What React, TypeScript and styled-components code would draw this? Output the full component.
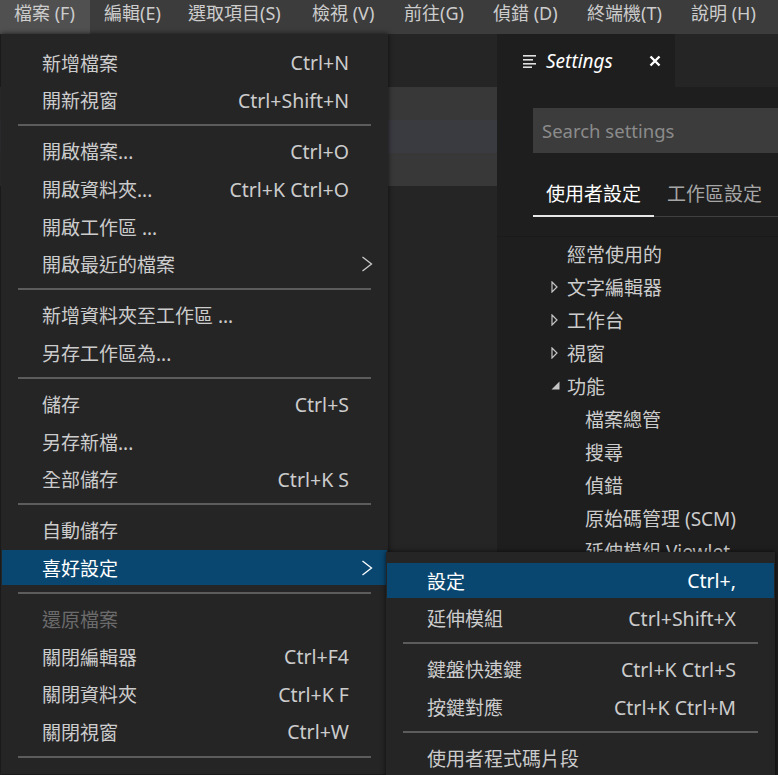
import React from "react";
import styled, { createGlobalStyle } from "styled-components";

const GlobalStyle = createGlobalStyle`
  html, body {
    margin: 0;
    padding: 0;
    background: #252526;
  }
  body {
    font-family: "Noto Sans", "Noto Sans CJK TC", sans-serif;
    overflow: hidden;
  }
`;

type MenuEntry =
  | { sep: true }
  | {
      label: string;
      keys?: string;
      submenu?: boolean;
      active?: boolean;
      disabled?: boolean;
    };

const topItems = [
  { label: "檔案 (F)", w: 90, open: true },
  { label: "編輯(E)", w: 84 },
  { label: "選取項目(S)", w: 124 },
  { label: "檢視 (V)", w: 92 },
  { label: "前往(G)", w: 89 },
  { label: "偵錯 (D)", w: 94 },
  { label: "終端機(T)", w: 104 },
  { label: "說明 (H)", w: 100 },
];

const fileMenu: MenuEntry[] = [
  { label: "新增檔案", keys: "Ctrl+N" },
  { label: "開新視窗", keys: "Ctrl+Shift+N" },
  { sep: true },
  { label: "開啟檔案...", keys: "Ctrl+O" },
  { label: "開啟資料夾...", keys: "Ctrl+K Ctrl+O" },
  { label: "開啟工作區 ..." },
  { label: "開啟最近的檔案", submenu: true },
  { sep: true },
  { label: "新增資料夾至工作區 ..." },
  { label: "另存工作區為..." },
  { sep: true },
  { label: "儲存", keys: "Ctrl+S" },
  { label: "另存新檔..." },
  { label: "全部儲存", keys: "Ctrl+K S" },
  { sep: true },
  { label: "自動儲存" },
  { label: "喜好設定", submenu: true, active: true },
  { sep: true },
  { label: "還原檔案", disabled: true },
  { label: "關閉編輯器", keys: "Ctrl+F4" },
  { label: "關閉資料夾", keys: "Ctrl+K F" },
  { label: "關閉視窗", keys: "Ctrl+W" },
  { sep: true },
];

const prefsMenu: MenuEntry[] = [
  { label: "設定", keys: "Ctrl+,", active: true },
  { label: "延伸模組", keys: "Ctrl+Shift+X" },
  { sep: true },
  { label: "鍵盤快速鍵", keys: "Ctrl+K Ctrl+S" },
  { label: "按鍵對應", keys: "Ctrl+K Ctrl+M" },
  { sep: true },
  { label: "使用者程式碼片段" },
];

const tree = [
  { label: "經常使用的", level: 0 },
  { label: "文字編輯器", level: 0, twistie: "closed" },
  { label: "工作台", level: 0, twistie: "closed" },
  { label: "視窗", level: 0, twistie: "closed" },
  { label: "功能", level: 0, twistie: "open" },
  { label: "檔案總管", level: 1 },
  { label: "搜尋", level: 1 },
  { label: "偵錯", level: 1 },
  { label: "原始碼管理 (SCM)", level: 1 },
  { label: "延伸模組 Viewlet", level: 1 },
  { label: "終端機", level: 1 },
  { label: "工作", level: 1 },
];

const Screen = styled.div`
  position: relative;
  width: 778px;
  height: 775px;
  overflow: hidden;
  background: #252526;
`;

const MenuBar = styled.div`
  display: flex;
  height: 34px;
  background: #3c3c3c;
`;

const MenuBarItem = styled.div<{ $open?: boolean }>`
  flex: none;
  box-sizing: border-box;
  height: 34px;
  padding-left: 14px;
  line-height: 26px;
  font-size: 18px;
  color: #cccccc;
  white-space: nowrap;
  background: ${(p) => (p.$open ? "#505050" : "transparent")};
`;

const Workbench = styled.div`
  display: flex;
  height: 741px;
`;

const SideGroup = styled.div`
  width: 497px;
  flex: none;
  display: flex;
  flex-direction: column;
  background: #252526;
`;

const TabStrip = styled.div`
  display: flex;
  height: 53px;
  flex: none;
  background: #252526;
`;

const PreviewBlock = styled.div`
  height: 99px;
  display: flex;
  align-items: center;
  background: #383838;
`;

const PreviewBand = styled.div`
  height: 33px;
  width: 100%;
  background: #3a3a41;
`;

const SettingsEditor = styled.div`
  flex: 1;
  min-width: 0;
  display: flex;
  flex-direction: column;
  background: #1e1e1e;
  overflow: hidden;
`;

const EditorTab = styled.div`
  width: 178px;
  box-sizing: border-box;
  display: flex;
  align-items: center;
  padding-left: 26px;
  background: #1e1e1e;
  color: #ffffff;
`;

const TabTitle = styled.span`
  margin-left: 9px;
  font-size: 19px;
  font-style: italic;
`;

const CloseButton = styled.span`
  margin-left: auto;
  margin-right: 14px;
  display: flex;
`;

const SettingsHeader = styled.div`
  height: 150px;
  flex: none;
  box-sizing: border-box;
  padding: 21px 0 0 36px;
  border-bottom: 1px solid #1a1a1a;
`;

const SearchBox = styled.div`
  height: 45px;
  margin-right: -40px;
  padding-left: 9px;
  display: flex;
  align-items: center;
  background: #3c3c3c;
  color: #8b8b8b;
  font-size: 18.5px;
`;

const ScopeTabs = styled.div`
  display: flex;
  margin-top: 17px;
  margin-right: -40px;
  border-bottom: 1px solid #404040;
`;

const ScopeTab = styled.div<{ $active?: boolean }>`
  height: 45px;
  padding: 0 13px;
  margin-bottom: -1px;
  display: flex;
  align-items: center;
  font-size: 19px;
  color: ${(p) => (p.$active ? "#ffffff" : "#a6a6a6")};
  border-bottom: 2px solid ${(p) => (p.$active ? "#e7e7e7" : "transparent")};
`;

const Tree = styled.div`
  padding-top: 0;
`;

const TreeRow = styled.div<{ $level: number }>`
  height: 33px;
  display: flex;
  align-items: center;
  padding-left: ${(p) => 54 + p.$level * 18}px;
  font-size: 19px;
  color: #cccccc;
  white-space: nowrap;
`;

const Twistie = styled.span`
  width: 16px;
  flex: none;
  display: flex;
  align-items: center;
`;

const MenuPanel = styled.div<{ $top: number; $left: number; $width: number }>`
  position: absolute;
  top: ${(p) => p.$top}px;
  left: ${(p) => p.$left}px;
  width: ${(p) => p.$width}px;
  box-sizing: border-box;
  padding: 10px 1px;
  background: #252526;
  box-shadow: 0 0 5px rgba(0, 0, 0, 0.7);
  display: flex;
  flex-direction: column;
`;

const MenuRow = styled.div<{ $active?: boolean; $disabled?: boolean }>`
  display: grid;
  grid-template-columns: 1fr auto 38px;
  align-items: center;
  height: 35px;
  margin: 1.3px 0;
  padding-left: 40px;
  font-size: 19px;
  white-space: nowrap;
  color: ${(p) => (p.$active ? "#ffffff" : p.$disabled ? "#6b6b6b" : "#cccccc")};
  background: ${(p) => (p.$active ? "#094771" : "transparent")};
`;

const Shortcut = styled.span`
  text-align: right;
  font-size: 19.5px;
`;

const Chevron = styled.span`
  margin-left: 12px;
  display: flex;
`;

const MenuSeparator = styled.div`
  height: 2px;
  margin: 5px 16px 6.5px;
  background: #5c5c5c;
`;

const ChevronIcon = () => (
  <svg width="12" height="16" viewBox="0 0 12 16">
    <polyline points="1.5,1 10.5,8 1.5,15" fill="none" stroke="currentColor" strokeWidth="1.3" />
  </svg>
);

const SettingsIcon = () => (
  <svg width="14" height="14" viewBox="0 0 14 14">
    <rect x="0" y="1" width="13" height="1.6" fill="#e0e0e0" />
    <rect x="0" y="5" width="10" height="1.6" fill="#e0e0e0" />
    <rect x="0" y="9" width="13" height="1.6" fill="#e0e0e0" />
    <rect x="0" y="12.4" width="9" height="1.6" fill="#e0e0e0" />
  </svg>
);

const CloseIcon = () => (
  <svg width="12" height="12" viewBox="0 0 12 12">
    <path d="M1.5 1.5 L10.5 10.5 M10.5 1.5 L1.5 10.5" stroke="#ffffff" strokeWidth="2.4" />
  </svg>
);

const TwistieIcon = ({ open }: { open: boolean }) =>
  open ? (
    <svg width="9" height="9" viewBox="0 0 9 9">
      <polygon points="8.5,0.5 8.5,8.5 0.5,8.5" fill="#c5c5c5" />
    </svg>
  ) : (
    <svg width="7" height="12" viewBox="0 0 7 12">
      <polygon points="1,1 6,6 1,11" fill="none" stroke="#c5c5c5" strokeWidth="1.2" />
    </svg>
  );

const Menu = ({
  entries,
  top,
  left,
  width,
}: {
  entries: MenuEntry[];
  top: number;
  left: number;
  width: number;
}) => (
  <MenuPanel $top={top} $left={left} $width={width}>
    {entries.map((e, i) =>
      "sep" in e ? (
        <MenuSeparator key={i} />
      ) : (
        <MenuRow key={i} $active={e.active} $disabled={e.disabled}>
          <span>{e.label}</span>
          <Shortcut>{e.keys}</Shortcut>
          {e.submenu ? (
            <Chevron>
              <ChevronIcon />
            </Chevron>
          ) : (
            <span />
          )}
        </MenuRow>
      )
    )}
  </MenuPanel>
);

export default function App() {
  return (
    <>
      <GlobalStyle />
      <Screen>
        <MenuBar>
          {topItems.map((t) => (
            <MenuBarItem key={t.label} $open={t.open} style={{ width: t.w }}>
              {t.label}
            </MenuBarItem>
          ))}
        </MenuBar>
        <Workbench>
          <SideGroup>
            <TabStrip />
            <PreviewBlock>
              <PreviewBand />
            </PreviewBlock>
          </SideGroup>
          <SettingsEditor>
            <TabStrip>
              <EditorTab>
                <SettingsIcon />
                <TabTitle>Settings</TabTitle>
                <CloseButton>
                  <CloseIcon />
                </CloseButton>
              </EditorTab>
            </TabStrip>
            <SettingsHeader>
              <SearchBox>Search settings</SearchBox>
              <ScopeTabs>
                <ScopeTab $active>使用者設定</ScopeTab>
                <ScopeTab>工作區設定</ScopeTab>
              </ScopeTabs>
            </SettingsHeader>
            <Tree>
              {tree.map((r) => (
                <TreeRow key={r.label} $level={r.level}>
                  <Twistie>{r.twistie && <TwistieIcon open={r.twistie === "open"} />}</Twistie>
                  {r.label}
                </TreeRow>
              ))}
            </Tree>
          </SettingsEditor>
        </Workbench>
        <Menu entries={fileMenu} top={34} left={1} width={387} />
        <Menu entries={prefsMenu} top={552} left={386} width={389} />
      </Screen>
    </>
  );
}
